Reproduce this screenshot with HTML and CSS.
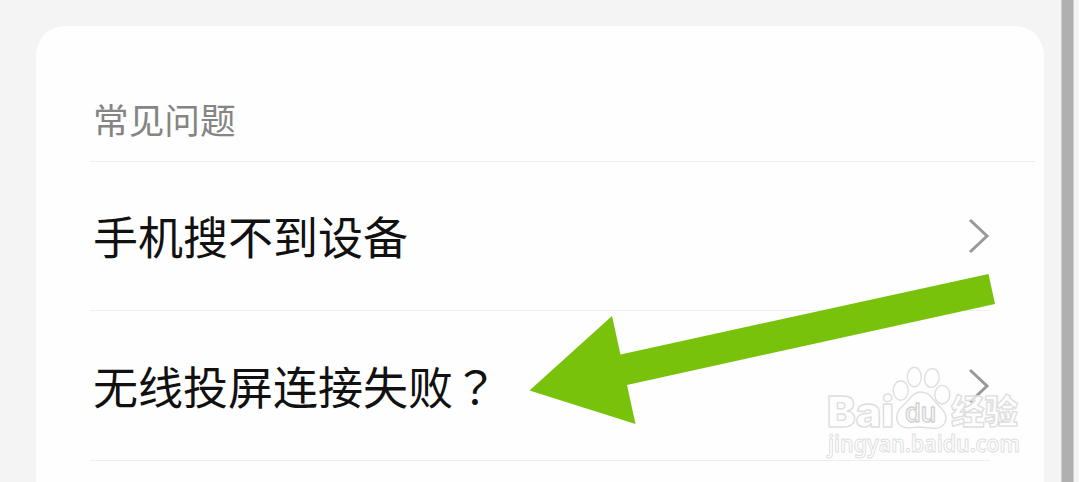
FILE: index.html
```html
<!DOCTYPE html>
<html lang="zh-CN">
<head>
<meta charset="utf-8">
<title>常见问题</title>
<link rel="stylesheet" href="styles.css">
</head>
<body>
<div class="page">
  <main class="card">
    <h1 class="heading">常见问题</h1>
    <ul class="list">
      <li class="row">
        <span class="label">手机搜不到设备</span>
        <svg class="chevron" width="23" height="38" viewBox="0 0 23 38"><path d="M3 3 20 19 3 35"/></svg>
      </li>
      <li class="row">
        <span class="label">无线投屏连接失败<span class="mark-centered" lang="zh-TW">？</span></span>
        <svg class="chevron" width="23" height="38" viewBox="0 0 23 38"><path d="M3 3 20 19 3 35"/></svg>
      </li>
    </ul>
  </main>
  <div class="scrollbar"></div>
</div>
<svg class="arrow" width="466" height="152" viewBox="529 273 466 152">
  <path d="M529.5 390.5 612 316 620.5 354.5 988.5 274 995 304 627 385 635.5 424Z"/>
</svg>
<svg class="watermark" width="204" height="110" viewBox="822 362 204 110">
  <g class="mark">
    <text class="brand" x="827" y="426.5" font-size="42.5" textLength="67" lengthAdjust="spacingAndGlyphs">Bai</text>
    <ellipse cx="900.7" cy="390.5" rx="7.5" ry="9.7"/>
    <ellipse cx="914.3" cy="377" rx="7" ry="9.7"/>
    <ellipse cx="931.8" cy="378" rx="7.3" ry="9.4" transform="rotate(10 931.8 378)"/>
    <ellipse cx="942.3" cy="394.7" rx="7.5" ry="9.3"/>
    <path d="M921 392C912 392 910 400 903 405.5C896.500 411 895.500 418 898 422.500C902 430.500 913 427 921 427C930 428 941 431 945 422.500C947.500 416 945 411.500 938.500 405.500C932 399 930 392 921 392Z"/>
    <text class="du" x="905" y="422" font-size="26" textLength="31" lengthAdjust="spacingAndGlyphs">du</text>
    <text class="cjk" x="951" y="424" font-size="34" textLength="67" lengthAdjust="spacingAndGlyphs">经验</text>
    <text class="site" x="828" y="452" font-size="22.5" textLength="192" lengthAdjust="spacingAndGlyphs">jingyan.baidu.com</text>
  </g>
</svg>
</body>
</html>
```

FILE: styles.css
```css
* { box-sizing: border-box; }
body {
  position: relative;
  height: 482px;
  margin: 0;
  overflow: hidden;
  background: #f4f4f4;
  font-family: "Noto Sans CJK SC", sans-serif;
}
.page {
  display: flex;
  justify-content: space-between;
  height: 482px;
  padding: 0 5px 0 36px;
}
.card {
  width: 1008px;
  height: 456px;
  margin-top: 26px;
  padding: 0 9px 0 54px;
  border-radius: 29px 29px 0 0;
  background: #fefefe;
}
.heading {
  height: 136px;
  margin: 0;
  padding: 67px 0 0 3px;
  border-bottom: 1px solid #eeeeee;
  color: #858585;
  font-size: 35.7px;
  font-weight: 400;
  line-height: 52px;
}
.list {
  margin: 0;
  padding: 0;
  list-style: none;
}
.row {
  display: flex;
  align-items: center;
  justify-content: space-between;
  width: 900px;
  height: 149px;
  padding: 0 0 0 3px;
  border-bottom: 1px solid #eeeeee;
}
.row + .row { height: 150px; }
.label {
  color: #111111;
  font-size: 45px;
  line-height: 66px;
}
.mark-centered { font-family: "Noto Sans CJK TC", sans-serif; }
.chevron {
  fill: none;
  stroke: #999999;
  stroke-width: 3;
}
.scrollbar {
  width: 13px;
  border: solid #cecece;
  border-width: 0 1px;
  background: #b0b0b0;
}
.arrow {
  position: absolute;
  left: 529px;
  top: 273px;
  fill: #78c20b;
}
.watermark {
  position: absolute;
  left: 822px;
  top: 362px;
}
.mark {
  fill: #fefefe;
  fill-opacity: 0.7;
  stroke: #dedede;
  stroke-width: 1.4;
  stroke-linejoin: round;
}
.brand { font-family: Inter, sans-serif; font-weight: 900; }
.du { font-family: Inter, sans-serif; font-weight: 500; stroke: #d2d2d2; }
.cjk { font-family: "Noto Sans CJK SC", sans-serif; font-weight: 900; }
.site { font-family: "Noto Sans", sans-serif; font-weight: 600; stroke-width: 1; }
```
